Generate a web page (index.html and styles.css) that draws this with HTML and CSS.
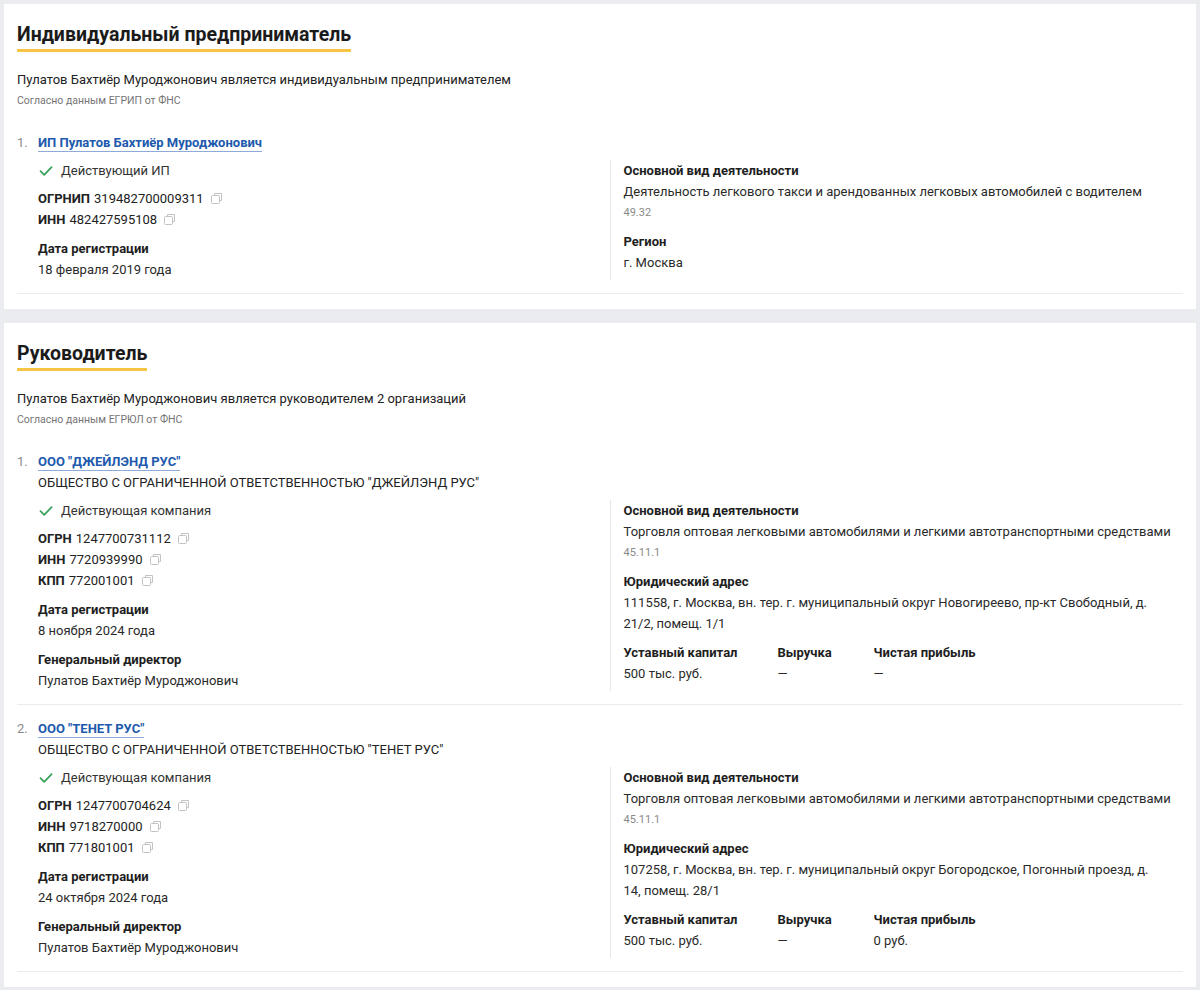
FILE: index.html
```html
<!DOCTYPE html>
<html lang="ru">
<head>
<meta charset="utf-8">
<title>Пулатов Бахтиёр Муроджонович</title>
<link rel="stylesheet" href="styles.css">
</head>
<body>
<div class="page">

  <section class="card">
    <h2 class="title"><span>Индивидуальный предприниматель</span></h2>
    <p class="lead">Пулатов Бахтиёр Муроджонович является индивидуальным предпринимателем</p>
    <p class="source">Согласно данным ЕГРИП от ФНС</p>
    <ol class="list">
      <li class="item">
        <div class="num">1.</div>
        <div class="body">
          <div class="head"><a class="link" href="#">ИП Пулатов Бахтиёр Муроджонович</a></div>
          <div class="cols">
            <div class="left">
              <div class="status"><svg class="check" viewBox="0 0 14 12" width="14" height="12"><path d="M1.5 6.2 5.2 9.8 12.6 2.2"/></svg>Действующий ИП</div>
              <div class="ids">
                <div class="idrow"><b>ОГРНИП</b> 319482700009311<svg class="copy" viewBox="0 0 11 11" width="11" height="11"><path d="M3.5 2.5V0.5h7v7h-2"/><rect x="0.5" y="2.5" width="8" height="8" rx="1"/></svg></div>
                <div class="idrow"><b>ИНН</b> 482427595108<svg class="copy" viewBox="0 0 11 11" width="11" height="11"><path d="M3.5 2.5V0.5h7v7h-2"/><rect x="0.5" y="2.5" width="8" height="8" rx="1"/></svg></div>
              </div>
              <div class="block">
                <div class="label">Дата регистрации</div>
                <div class="value">18 февраля 2019 года</div>
              </div>
            </div>
            <div class="right">
              <div class="block first">
                <div class="label">Основной вид деятельности</div>
                <div class="value">Деятельность легкового такси и арендованных легковых автомобилей с водителем</div>
                <div class="code">49.32</div>
              </div>
              <div class="block">
                <div class="label">Регион</div>
                <div class="value">г. Москва</div>
              </div>
            </div>
          </div>
        </div>
      </li>
    </ol>
  </section>

  <section class="card">
    <h2 class="title"><span>Руководитель</span></h2>
    <p class="lead">Пулатов Бахтиёр Муроджонович является руководителем 2 организаций</p>
    <p class="source">Согласно данным ЕГРЮЛ от ФНС</p>
    <ol class="list">
      <li class="item">
        <div class="num">1.</div>
        <div class="body">
          <div class="head"><a class="link" href="#">ООО "ДЖЕЙЛЭНД РУС"</a></div>
          <div class="fullname">ОБЩЕСТВО С ОГРАНИЧЕННОЙ ОТВЕТСТВЕННОСТЬЮ "ДЖЕЙЛЭНД РУС"</div>
          <div class="cols">
            <div class="left">
              <div class="status"><svg class="check" viewBox="0 0 14 12" width="14" height="12"><path d="M1.5 6.2 5.2 9.8 12.6 2.2"/></svg>Действующая компания</div>
              <div class="ids">
                <div class="idrow"><b>ОГРН</b> 1247700731112<svg class="copy" viewBox="0 0 11 11" width="11" height="11"><path d="M3.5 2.5V0.5h7v7h-2"/><rect x="0.5" y="2.5" width="8" height="8" rx="1"/></svg></div>
                <div class="idrow"><b>ИНН</b> 7720939990<svg class="copy" viewBox="0 0 11 11" width="11" height="11"><path d="M3.5 2.5V0.5h7v7h-2"/><rect x="0.5" y="2.5" width="8" height="8" rx="1"/></svg></div>
                <div class="idrow"><b>КПП</b> 772001001<svg class="copy" viewBox="0 0 11 11" width="11" height="11"><path d="M3.5 2.5V0.5h7v7h-2"/><rect x="0.5" y="2.5" width="8" height="8" rx="1"/></svg></div>
              </div>
              <div class="block">
                <div class="label">Дата регистрации</div>
                <div class="value">8 ноября 2024 года</div>
              </div>
              <div class="block">
                <div class="label">Генеральный директор</div>
                <div class="value">Пулатов Бахтиёр Муроджонович</div>
              </div>
            </div>
            <div class="right">
              <div class="block first">
                <div class="label">Основной вид деятельности</div>
                <div class="value">Торговля оптовая легковыми автомобилями и легкими автотранспортными средствами</div>
                <div class="code">45.11.1</div>
              </div>
              <div class="block">
                <div class="label">Юридический адрес</div>
                <div class="value addr">111558, г. Москва, вн. тер. г. муниципальный округ Новогиреево, пр-кт Свободный, д. 21/2, помещ. 1/1</div>
              </div>
              <div class="block fin">
                <div class="fincol"><div class="label">Уставный капитал</div><div class="value">500 тыс. руб.</div></div>
                <div class="fincol"><div class="label">Выручка</div><div class="value">—</div></div>
                <div class="fincol"><div class="label">Чистая прибыль</div><div class="value">—</div></div>
              </div>
            </div>
          </div>
        </div>
      </li>
      <li class="item">
        <div class="num">2.</div>
        <div class="body">
          <div class="head"><a class="link" href="#">ООО "ТЕНЕТ РУС"</a></div>
          <div class="fullname">ОБЩЕСТВО С ОГРАНИЧЕННОЙ ОТВЕТСТВЕННОСТЬЮ "ТЕНЕТ РУС"</div>
          <div class="cols">
            <div class="left">
              <div class="status"><svg class="check" viewBox="0 0 14 12" width="14" height="12"><path d="M1.5 6.2 5.2 9.8 12.6 2.2"/></svg>Действующая компания</div>
              <div class="ids">
                <div class="idrow"><b>ОГРН</b> 1247700704624<svg class="copy" viewBox="0 0 11 11" width="11" height="11"><path d="M3.5 2.5V0.5h7v7h-2"/><rect x="0.5" y="2.5" width="8" height="8" rx="1"/></svg></div>
                <div class="idrow"><b>ИНН</b> 9718270000<svg class="copy" viewBox="0 0 11 11" width="11" height="11"><path d="M3.5 2.5V0.5h7v7h-2"/><rect x="0.5" y="2.5" width="8" height="8" rx="1"/></svg></div>
                <div class="idrow"><b>КПП</b> 771801001<svg class="copy" viewBox="0 0 11 11" width="11" height="11"><path d="M3.5 2.5V0.5h7v7h-2"/><rect x="0.5" y="2.5" width="8" height="8" rx="1"/></svg></div>
              </div>
              <div class="block">
                <div class="label">Дата регистрации</div>
                <div class="value">24 октября 2024 года</div>
              </div>
              <div class="block">
                <div class="label">Генеральный директор</div>
                <div class="value">Пулатов Бахтиёр Муроджонович</div>
              </div>
            </div>
            <div class="right">
              <div class="block first">
                <div class="label">Основной вид деятельности</div>
                <div class="value">Торговля оптовая легковыми автомобилями и легкими автотранспортными средствами</div>
                <div class="code">45.11.1</div>
              </div>
              <div class="block">
                <div class="label">Юридический адрес</div>
                <div class="value addr">107258, г. Москва, вн. тер. г. муниципальный округ Богородское, Погонный проезд, д. 14, помещ. 28/1</div>
              </div>
              <div class="block fin">
                <div class="fincol"><div class="label">Уставный капитал</div><div class="value">500 тыс. руб.</div></div>
                <div class="fincol"><div class="label">Выручка</div><div class="value">—</div></div>
                <div class="fincol"><div class="label">Чистая прибыль</div><div class="value">0 руб.</div></div>
              </div>
            </div>
          </div>
        </div>
      </li>
    </ol>
  </section>

</div>
</body>
</html>
```
FILE: styles.css
```css
* { box-sizing: border-box; }
html, body { margin: 0; padding: 0; }
body {
  background: #eaecef;
  font-family: Roboto, "Liberation Sans", sans-serif;
  font-size: 13px;
  line-height: 21px;
  color: #222;
}
.page {
  padding: 4px 4px;
  display: flex;
  flex-direction: column;
  gap: 14px;
}
.card {
  background: #fff;
  padding: 18px 13px 15px 13px;
}
.title {
  margin: 0;
  font-size: 19.5px;
  line-height: 26px;
  font-weight: 700;
  color: #1b1b1b;
}
.title span {
  display: inline-block;
  padding-bottom: 1px;
  border-bottom: 3px solid #f6c544;
}
.lead {
  margin: 17px 0 0;
}
.source {
  margin: 0;
  font-size: 10.5px;
  line-height: 22px;
  color: #747474;
}
.list {
  list-style: none;
  margin: 20px 0 0;
  padding: 0;
}
.item {
  display: flex;
  padding-bottom: 13px;
  border-bottom: 1px solid #ebebeb;
}
.item + .item {
  padding-top: 13px;
}
.num {
  width: 21px;
  flex: none;
  color: #8a8a8a;
}
.body {
  flex: 1;
  min-width: 0;
}
.link {
  color: #2159ad;
  font-weight: 700;
  text-decoration: none;
  border-bottom: 1px solid #8eaad6;
  padding-bottom: 1px;
}
.cols {
  margin-top: 7px;
  display: grid;
  grid-template-columns: 1fr 1fr;
}
.status {
  display: flex;
  align-items: center;
  color: #333;
}
.check {
  fill: none;
  stroke: #35a05a;
  stroke-width: 1.7;
  stroke-linecap: round;
  stroke-linejoin: round;
  margin: 0 8px 0 1px;
}
.ids {
  margin-top: 7px;
}
.idrow {
  display: flex;
  align-items: center;
  white-space: nowrap;
}
.idrow b {
  font-weight: 700;
  margin-right: 4px;
}
.copy {
  fill: #fff;
  stroke: #c2c2c2;
  stroke-width: 1;
  margin-left: 7px;
}
.block {
  margin-top: 8px;
}
.block.first {
  margin-top: 0;
}
.label {
  font-weight: 700;
  color: #1e1e1e;
}
.value {
  color: #2a2a2a;
}
.addr {
  max-width: 540px;
}
.code {
  font-size: 11px;
  color: #8a8a8a;
}
.right {
  border-left: 1px solid #e6e6e6;
  padding-left: 13px;
  margin-left: -1px;
}
.fin {
  display: grid;
  grid-template-columns: 154px 96px auto;
}
```
